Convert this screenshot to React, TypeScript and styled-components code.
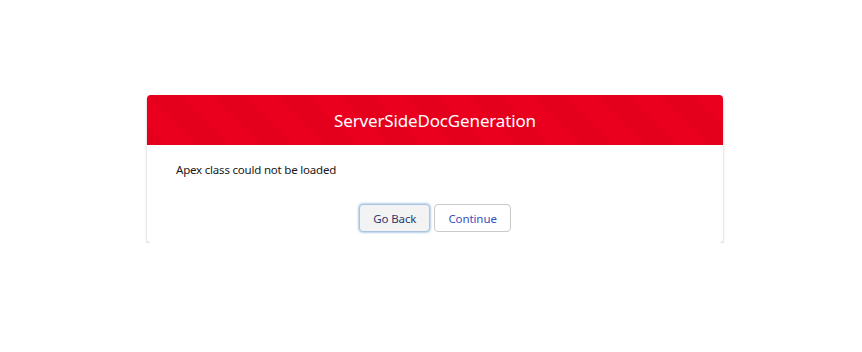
import styled, { createGlobalStyle } from 'styled-components';

const GlobalStyle = createGlobalStyle`
  body {
    margin: 0;
    background: #ffffff;
    font-family: 'Noto Sans', 'Open Sans', sans-serif;
  }
`;

const Page = styled.div`
  padding: 95px 0 0 147px;
`;

const Card = styled.section`
  width: 576px;
  background: #ffffff;
  border-radius: 4px;
  box-shadow: 0 2px 3px rgba(0, 0, 0, 0.2), 0 0 1px rgba(0, 0, 0, 0.14);
  overflow: hidden;
`;

const Header = styled.header`
  height: 50px;
  display: flex;
  align-items: center;
  justify-content: center;
  color: #ffffff;
  font-size: 17px;
  letter-spacing: -0.15px;
  background-color: #ea001e;
  background-image: linear-gradient(
    45deg,
    rgba(0, 0, 0, 0.025) 25%,
    transparent 25%,
    transparent 50%,
    rgba(0, 0, 0, 0.025) 50%,
    rgba(0, 0, 0, 0.025) 75%,
    transparent 75%,
    transparent
  );
  background-size: 64px 64px;
`;

const Message = styled.p`
  margin: 0;
  padding: 16px 29px 0;
  font-size: 11.5px;
  letter-spacing: -0.2px;
  line-height: 18px;
  color: #181818;
`;

const Footer = styled.footer`
  display: flex;
  justify-content: center;
  gap: 4px;
  padding: 25px 0 11px;
`;

const Button = styled.button<{ $focused?: boolean }>`
  height: 28px;
  padding: 0 13px;
  white-space: nowrap;
  font-family: inherit;
  font-size: 11.5px;
  letter-spacing: -0.1px;
  border-radius: 4px;
  border: 1px solid ${(p) => (p.$focused ? '#a9c4dc' : '#c9c9c9')};
  background: ${(p) => (p.$focused ? '#f3f3f3' : '#ffffff')};
  color: ${(p) => (p.$focused ? '#2b3a6b' : '#3a4ec0')};
  box-shadow: ${(p) => (p.$focused ? '0 0 2px 1px rgba(120, 170, 215, 0.55)' : 'none')};
  cursor: pointer;
`;

export default function App() {
  return (
    <>
      <GlobalStyle />
      <Page>
        <Card>
          <Header>ServerSideDocGeneration</Header>
          <Message>Apex class could not be loaded</Message>
          <Footer>
            <Button $focused>Go Back</Button>
            <Button>Continue</Button>
          </Footer>
        </Card>
      </Page>
    </>
  );
}
